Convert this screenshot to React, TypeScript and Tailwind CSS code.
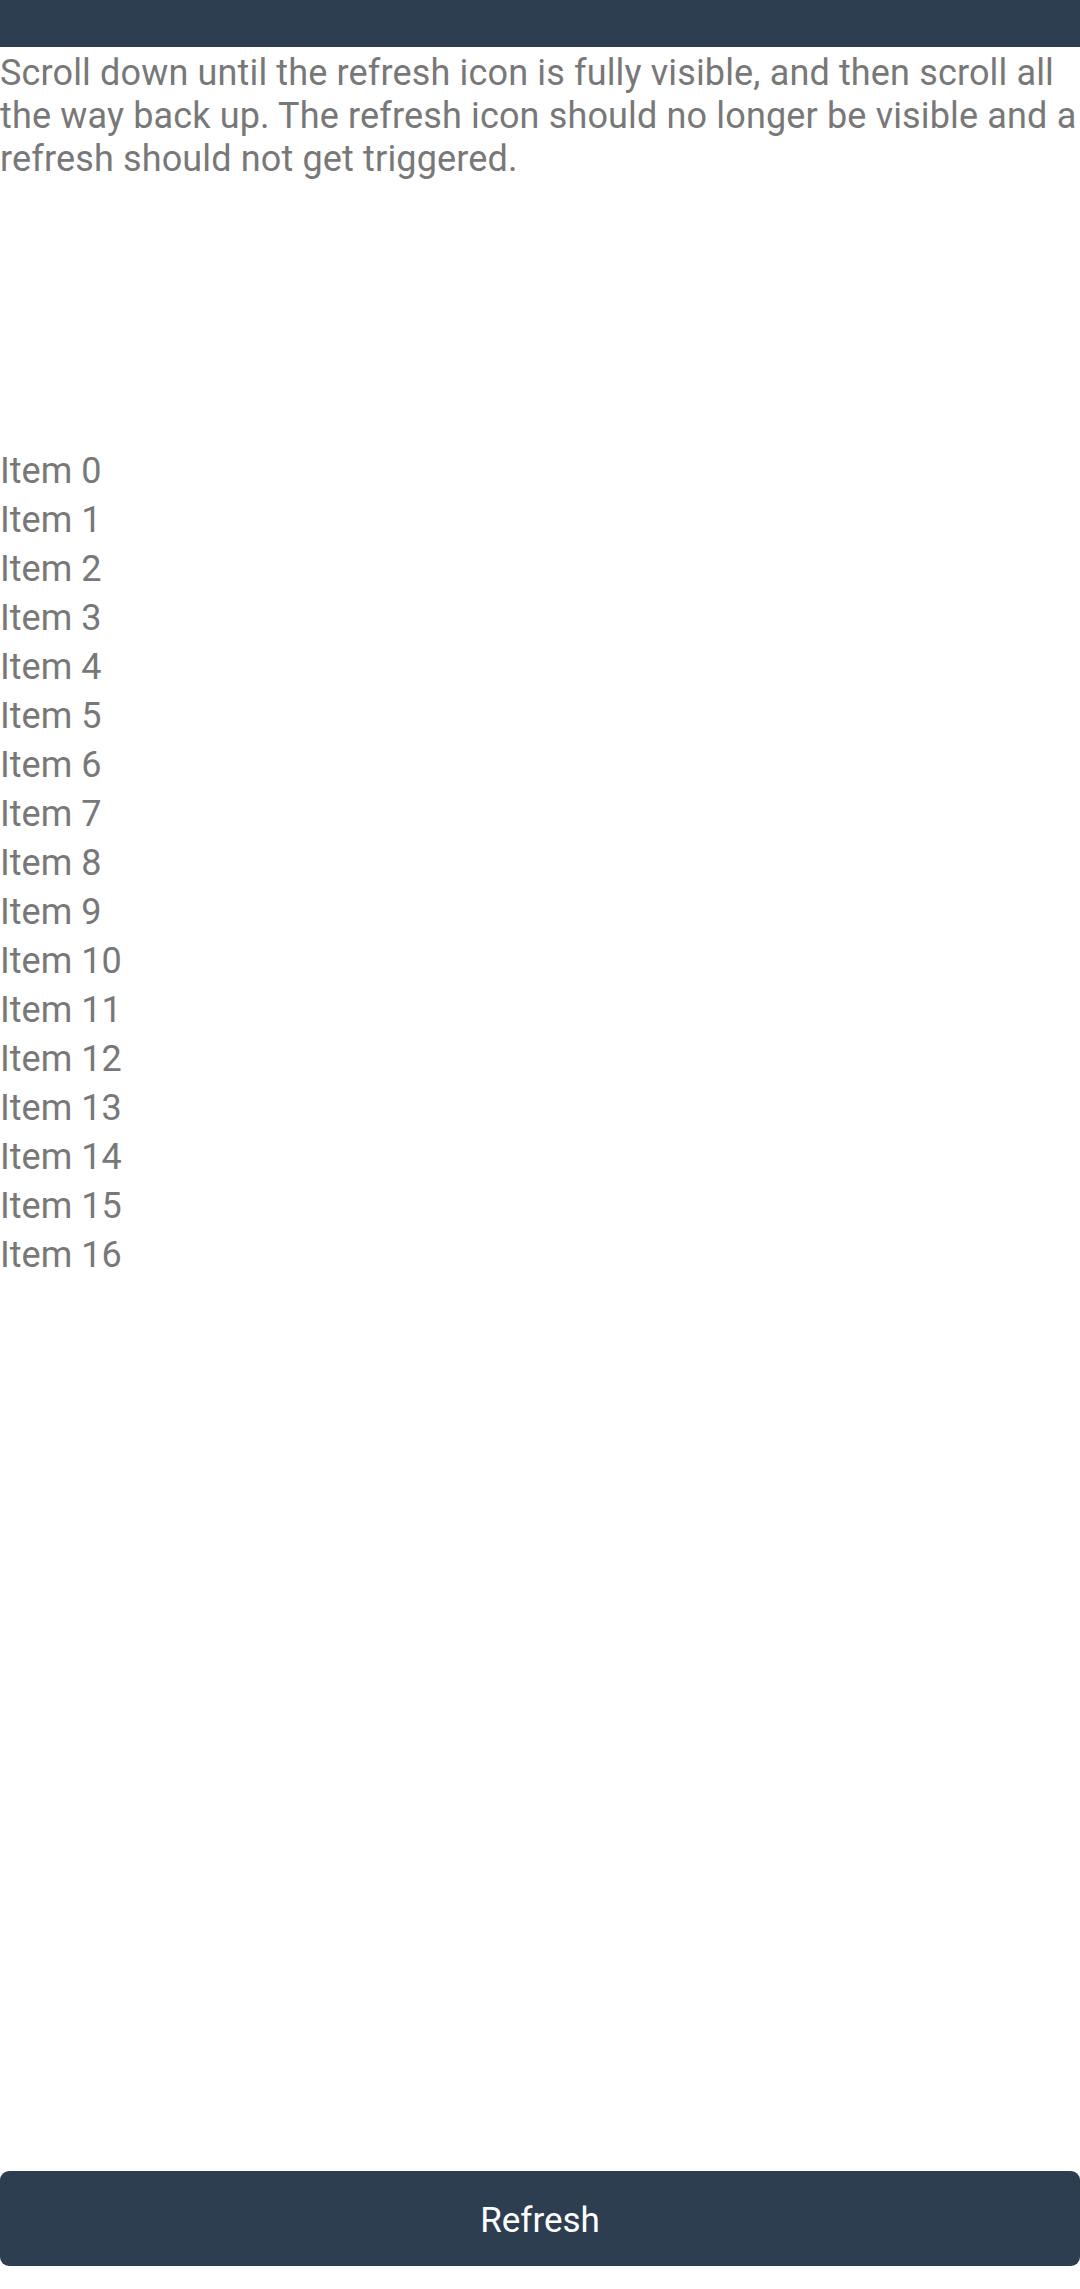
import React from 'react';

const items = Array.from({ length: 17 }, (_, i) => `Item ${i}`);

export default function App() {
  return (
    <div className="flex h-[2289px] w-[1080px] flex-col bg-white font-['Roboto',sans-serif] text-[#787878]">
      <div className="h-[47px] shrink-0 bg-[#2c3e50]" />
      <p className="mt-[5px] text-[36px] leading-[43px] tracking-[0.15px]">
        Scroll down until the refresh icon is fully visible, and then scroll all the way back up. The refresh icon
        should no longer be visible and a refresh should not get triggered.
      </p>
      <div className="h-[266px] shrink-0" />
      <ul>
        {items.map((item) => (
          <li key={item} className="text-[36px] leading-[49px]">
            {item}
          </li>
        ))}
      </ul>
      <div className="flex-1" />
      <button className="mb-[23px] h-[95px] w-full shrink-0 rounded-[9px] bg-[#2c3e50] pt-[5px] text-[35px] text-white">
        Refresh
      </button>
    </div>
  );
}
